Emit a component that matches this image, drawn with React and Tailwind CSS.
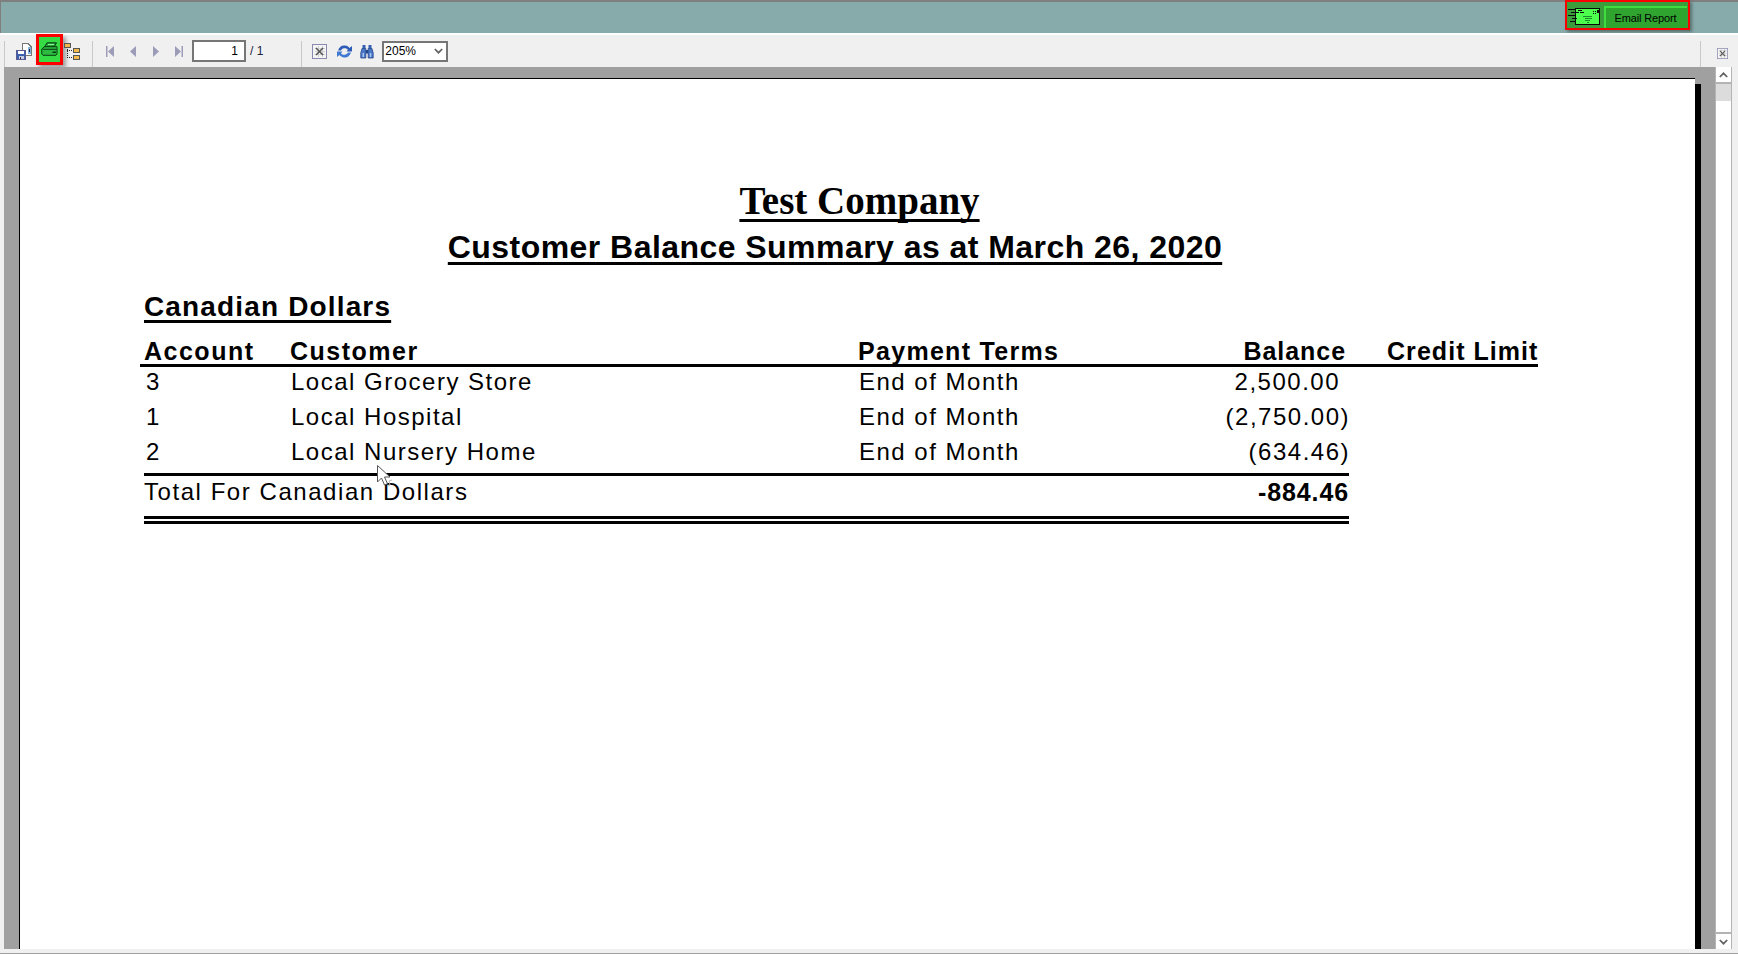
import React from "react";

const sans = "font-['Liberation_Sans',Arial,sans-serif]";

function SaveIcon() {
  return (
    <svg width="16" height="17" viewBox="0 0 16 17" shapeRendering="crispEdges">
      <path d="M6.500 0.500h5.500l3 3v9H6.500z" fill="#fff" stroke="#777" />
      <path d="M12 4h3v7h-3z" fill="#7fb0e0" />
      <path d="M13 6h1v3h-1z" fill="#223" />
      <path d="M0.500 7.500h9v9h-9z" fill="#3d5fb0" stroke="#5a5a90" />
      <path d="M2 8h6v3H2z" fill="#fff" />
      <path d="M3 13h5v3H3z" fill="#c8cce0" />
      <path d="M4 14h1v2H4z" fill="#334" />
    </svg>
  );
}

function PrinterIcon() {
  return (
    <svg width="17" height="14" viewBox="0 0 17 14">
      <path d="M6 .8h9.500L13 5H3.500z" fill="#23a838" stroke="#0a3a12" strokeWidth="1" />
      <path d="M.8 7l2.700-2.300H16V12l-1 1.300H2L.8 12z" fill="#2cbb40" stroke="#0a3a12" strokeWidth="1" />
      <path d="M2 7.300h13.500" stroke="#0a3a12" strokeWidth="1" />
      <path d="M11.500 9.500h3.500v1.500h-3.500z" fill="#0a3a12" />
      <path d="M7 2.500h6" stroke="#8ff09a" strokeWidth="1" />
    </svg>
  );
}

function TreeIcon() {
  return (
    <svg width="16" height="17" viewBox="0 0 16 17" shapeRendering="crispEdges">
      <path d="M0.500 0.500h6v4h-6z" fill="#f5b94a" stroke="#555" />
      <path d="M9.500 5.500h6v4h-6z" fill="#f5b94a" stroke="#555" />
      <path d="M9.500 12.500h6v4h-6z" fill="#f5b94a" stroke="#555" />
      <path d="M3 6v9M3 7h6M3 14.500h6" stroke="#222" strokeDasharray="1 1" fill="none" />
    </svg>
  );
}

function Nav({ d }) {
  return (
    <svg width="10" height="11" viewBox="0 0 10 11" className="shrink-0">
      <path d={d} fill="#9c9cb8" />
    </svg>
  );
}

function GridXIcon({ size = 15 }) {
  return (
    <svg width={size} height={size} viewBox="0 0 15 15" shapeRendering="crispEdges">
      <path d="M0.500 0.500h14v14h-14z" fill="#f4f4f4" stroke="#8a8ab0" />
      <path d="M3 4h10M3 7h10M3 10h10M6 2v11M10 2v11" stroke="#d0d0d0" />
      <path d="M4 4l7 7M11 4l-7 7" stroke="#555" strokeWidth="1.500" shapeRendering="geometricPrecision" />
    </svg>
  );
}

function RefreshIcon() {
  return (
    <svg width="17" height="15" viewBox="0 0 17 15">
      <path d="M2 6.500C3 3 6 1 9 1.500c2 .3 3.500 1.200 4.500 2.500L16 2v5.500h-5.500l1.500-1.700C11 4.500 9.500 4 8 4.300 6.500 4.600 5.500 5.500 5 6.500z" fill="#2e5db8" />
      <path d="M15 8.500C14 12 11 14 8 13.500c-2-.3-3.500-1.200-4.500-2.500L1 13V7.500h5.500L5 9.200c1 1.300 2.500 1.800 4 1.500 1.500-.3 2.500-1.200 3-2.200z" fill="#3f78d0" />
    </svg>
  );
}

function BinocularsIcon() {
  return (
    <svg width="14" height="15" viewBox="0 0 14 15">
      <path d="M2.500 1h3v3.500h-3zM8.500 1h3v3.500h-3z" fill="#3560b0" />
      <path d="M2 4.500h3.800V14H.8v-5z" fill="#4a78c8" stroke="#24468c" strokeWidth=".8" />
      <path d="M8.200 4.500H12l1.200 4.500V14h-5z" fill="#4a78c8" stroke="#24468c" strokeWidth=".8" />
      <path d="M5.800 6h2.400v3.500H5.800z" fill="#24468c" />
      <path d="M2.500 9h1.500v4H2.500zM9.800 9h1.500v4H9.800z" fill="#a9c4ee" />
    </svg>
  );
}

function EnvelopeIcon() {
  return (
    <svg width="32" height="18" viewBox="0 0 32 18" shapeRendering="crispEdges" className="mt-[4px] shrink-0">
      <path d="M7.500 0.500h24v16h-24z" fill="#4dff4d" stroke="#0a0a0a" />
      <path d="M0 1h7M3 4h8M0 7h8M4 10h5M2 13h6M10 2h4M12 4h4" stroke="#0a0a0a" />
      <path d="M25 3h1v1h-1zM27 3h1v1h-1zM29 2h2v3h-2zM25 5h1v1h-1zM27 5h1v1h-1z" fill="#0a0a0a" />
      <path d="M15 8h9M17 10h7M17 12h5M19 14h2" stroke="#1a8a2a" />
    </svg>
  );
}

function Chevron({ up, className }) {
  return (
    <svg width="9" height="6" viewBox="0 0 9 6" className={className}>
      <path d={up ? "M0.800 5L4.500 1.300 8.200 5" : "M0.800 1L4.500 4.700 8.200 1"} fill="none" stroke="#606060" strokeWidth="1.700" />
    </svg>
  );
}

function Cursor() {
  return (
    <svg width="16" height="24" viewBox="0 0 16 24" className="absolute left-[376px] top-[464px]">
      <path d="M1.500 1.500V18l4-4 3 7 3-1.300-3-6.700h5.500z" fill="#fff" stroke="#555" strokeWidth="1" />
      <path d="M16 16l-3 1 1 4-2 1" fill="none" stroke="#bbb" strokeWidth="1" />
    </svg>
  );
}

const under = "underline decoration-[3px] [text-decoration-skip-ink:none]";

function Row({ acct, name, terms, amount, pr }) {
  return (
    <div className="flex h-[35px] items-start text-[24px] leading-[30px] tracking-[1.5px] whitespace-nowrap">
      <div className="w-[147px] shrink-0 pl-[2px]">{acct}</div>
      <div className="w-[568px] shrink-0">{name}</div>
      <div className="w-[300px] shrink-0">{terms}</div>
      <div className={`flex-1 text-right ${pr}`}>{amount}</div>
    </div>
  );
}

export default function App() {
  return (
    <div className={`relative flex h-[954px] w-[1738px] flex-col overflow-hidden bg-[#f0f0f0] text-black ${sans}`}>
      {/* Title strip */}
      <header className="flex h-[33px] shrink-0 items-start justify-end border-t-2 border-l border-[#7f7f7f] bg-[#87abaa] pr-[48px]">
        <div className="-mt-[2px] flex h-[30px] w-[125px] items-center gap-[4px] border-2 border-[#ff0000] bg-[#3a9c3a] pl-px shadow-[2px_2px_3px_rgba(0,0,0,0.35)]">
          <EnvelopeIcon />
          <button className="mt-[4px] flex h-[22px] w-[83px] items-center justify-center border-t-2 border-l-2 border-[#3fdc3f] bg-[#2fa52f] pr-[2px] text-[11px] leading-none tracking-[-0.15px]">
            Email Report
          </button>
        </div>
      </header>
      <div className="h-[2px] shrink-0 bg-white" />

      {/* Toolbar */}
      <div className="flex h-[32px] shrink-0 items-center">
        <div className="ml-[4px] mt-[5px] h-[26px] w-px bg-[#c8c8c8]" />
        <div className="ml-[11px]"><SaveIcon /></div>
        <div className="ml-[4px] -mt-[4px] flex h-[31px] w-[27px] items-center justify-center border-[3px] border-[#ff0000] bg-[#35dc46] shadow-[3px_3px_4px_rgba(0,0,0,0.35)]">
          <PrinterIcon />
        </div>
        <div className="ml-[1px]"><TreeIcon /></div>
        <div className="ml-[12px] mt-[5px] h-[26px] w-px bg-[#c8c8c8]" />
        <div className="ml-[12px] flex w-[80px] items-center gap-[13px]">
          <Nav d="M1 0h1.500v11H1zM9 0v11L3 5.500z" />
          <Nav d="M8 0v11L2 5.500z" />
          <Nav d="M2 0v11l6-5.500z" />
          <Nav d="M1 0v11l6-5.500zM7.500 0H9v11H7.500z" />
        </div>
        <div className="ml-[7px] flex h-[22px] w-[54px] items-center justify-end border-2 border-[#767676] bg-white pr-[6px] text-[12px] leading-none">1</div>
        <span className="ml-[4px] text-[12px] leading-none text-[#202040]">/ 1</span>
        <div className="ml-[38px] mt-[5px] h-[26px] w-px bg-[#c8c8c8]" />
        <div className="ml-[10px]"><GridXIcon /></div>
        <div className="ml-[9px]"><RefreshIcon /></div>
        <div className="ml-[7px]"><BinocularsIcon /></div>
        <div className="ml-[8px] flex h-[21px] w-[66px] items-center justify-between border-2 border-[#767676] bg-white pl-[1px] pr-[3px] text-[12px] leading-none">
          <span>205%</span>
          <Chevron />
        </div>
        <div className="ml-auto mr-[16px] mt-[5px] h-[26px] w-px bg-[#c8c8c8]" />
        <div className="mr-[10px] mt-[5px]"><GridXIcon size={11} /></div>
      </div>

      {/* Viewer */}
      <div className="flex min-h-0 flex-1">
        <div className="w-[4px] shrink-0" />
        <main className="min-w-0 flex-1 overflow-hidden bg-[#a0a0a0] pl-[15px] pt-[11px]">
          <article className="h-[1000px] w-[1676px] border-t border-l border-black bg-white pt-[100px] shadow-[6px_6px_0_#000]">
            <h1 className={`h-[44px] pl-[4px] text-center font-['Liberation_Serif',serif] text-[39px] font-bold leading-[44px] ${under} underline-offset-[5px]`}>
              Test Company
            </h1>
            <h2 className={`mt-[3px] h-[40px] pr-[45px] text-center text-[32px] font-bold leading-[42px] tracking-[0.45px] ${under} underline-offset-[4px]`}>
              Customer Balance Summary as at March 26, 2020
            </h2>
            <h3 className={`ml-[124px] mt-[23px] h-[36px] text-[28px] font-bold leading-[36px] tracking-[1.15px] ${under} underline-offset-[4px]`}>
              Canadian Dollars
            </h3>

            <div className="ml-[120px] mt-[11px] flex h-[31px] w-[1398px] items-start whitespace-nowrap border-b-[3px] border-black text-[25px] font-bold leading-[30px]">
              <div className="w-[150px] shrink-0 pl-[4px] tracking-[1.5px]">Account</div>
              <div className="w-[568px] shrink-0 tracking-[1.5px]">Customer</div>
              <div className="w-[300px] shrink-0 tracking-[1.3px]">Payment Terms</div>
              <div className="w-[188px] shrink-0 text-right tracking-[0.95px]">Balance</div>
              <div className="shrink-0 pl-[41px] tracking-[1.05px]">Credit Limit</div>
            </div>

            <div className="ml-[124px] w-[1205px] border-b-[3px] border-black pb-px">
              <Row acct="3" name="Local Grocery Store" terms="End of Month" amount="2,500.00" pr="pr-[9px]" />
              <Row acct="1" name="Local Hospital" terms="End of Month" amount="(2,750.00)" pr="-mr-px" />
              <Row acct="2" name="Local Nursery Home" terms="End of Month" amount="(634.46)" pr="-mr-px" />
            </div>

            <div className="ml-[124px] flex h-[43px] w-[1205px] items-start justify-between whitespace-nowrap border-b-[3px] border-black">
              <span className="text-[24px] leading-[32px] tracking-[1.55px]">Total For Canadian Dollars</span>
              <span className="text-[25px] font-bold leading-[32px] tracking-[0.9px]">-884.46</span>
            </div>
            <div className="ml-[124px] mt-[2px] h-[3px] w-[1205px] bg-black" />
          </article>
        </main>

        {/* Scrollbar */}
        <div className="flex w-[17px] shrink-0 flex-col border-x border-[#b4b4b4] bg-white">
          <div className="flex h-[17px] shrink-0 items-center justify-center border-b-2 border-[#b4b4b4]"><Chevron up /></div>
          <div className="h-[17px] shrink-0 bg-[#dcdcdc]" />
          <div className="flex-1" />
          <div className="flex h-[17px] shrink-0 items-center justify-center border-t-2 border-[#b4b4b4]"><Chevron /></div>
        </div>
        <div className="w-[6px] shrink-0" />
      </div>

      <div className="h-[5px] shrink-0 border-b border-[#a0a0a0]" />
      <Cursor />
    </div>
  );
}
